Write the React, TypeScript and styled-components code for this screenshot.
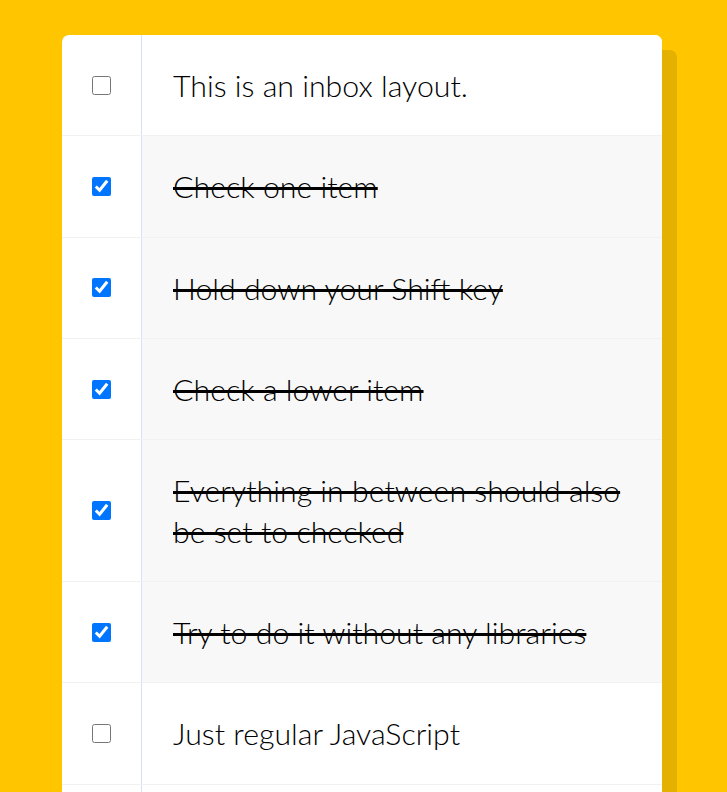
import { useRef, useState } from 'react';
import styled, { createGlobalStyle } from 'styled-components';

// Список задач из упражнения: отмеченные пункты зачёркнуты.
const ITEMS = [
  'This is an inbox layout.',
  'Check one item',
  'Hold down your Shift key',
  'Check a lower item',
  'Everything in between should also be set to checked',
  'Try to do it without any libraries',
  'Just regular JavaScript',
  'Good Luck!',
  "Don't forget to tweet your result!",
];

const INITIAL = [false, true, true, true, true, true, false, false, false];

const GlobalStyle = createGlobalStyle`
  html {
    background: #ffc600;
  }
  body {
    margin: 0;
    font-family: Lato, 'Liberation Sans', sans-serif;
  }
`;

const Page = styled.div`
  padding: 35px 0 60px 62px;
`;

const Inbox = styled.div`
  width: 600px;
  background: #ffffff;
  border-radius: 7px;
  box-shadow: 15px 15px 0 rgba(0, 0, 0, 0.1);
  overflow: hidden;
`;

const Item = styled.label`
  display: flex;
  align-items: stretch;
  border-bottom: 1px solid #f1f1f1;

  &:last-child {
    border-bottom: 0;
  }
`;

const CheckCell = styled.div`
  width: 79px;
  flex: none;
  display: flex;
  align-items: center;
  justify-content: center;
`;

const Checkbox = styled.input`
  width: 19px;
  height: 19px;
  margin: 0 1px 0 0;
  accent-color: #0075ff;
`;

const Text = styled.p<{ $done: boolean }>`
  margin: 0;
  flex: 1;
  padding: 30px 30px 30px 31px;
  border-left: 1px solid #d1e2ff;
  font-size: 30.3px;
  font-weight: 300;
  line-height: 40.33px;
  color: #000000;
  background: ${({ $done }) => ($done ? '#f8f8f8' : '#ffffff')};
  text-decoration: ${({ $done }) => ($done ? 'line-through' : 'none')};
  text-decoration-thickness: 2.5px;
  transition: background 0.2s;
`;

export default function App() {
  const [checked, setChecked] = useState<boolean[]>(INITIAL);
  const lastChecked = useRef<number | null>(null);

  // Shift + клик отмечает всё между последним отмеченным и текущим пунктом.
  const handleClick = (index: number, shiftKey: boolean) => {
    setChecked((prev) => {
      const next = [...prev];
      const value = !prev[index];
      next[index] = value;
      if (shiftKey && value && lastChecked.current !== null) {
        const from = Math.min(lastChecked.current, index);
        const to = Math.max(lastChecked.current, index);
        for (let i = from; i <= to; i += 1) next[i] = true;
      }
      return next;
    });
    lastChecked.current = index;
  };

  return (
    <>
      <GlobalStyle />
      <Page>
        <Inbox>
          {ITEMS.map((text, index) => (
            <Item key={text}>
              <CheckCell>
                <Checkbox
                  type="checkbox"
                  checked={checked[index]}
                  onChange={() => undefined}
                  onClick={(e) => handleClick(index, e.shiftKey)}
                />
              </CheckCell>
              <Text $done={checked[index]}>{text}</Text>
            </Item>
          ))}
        </Inbox>
      </Page>
    </>
  );
}
